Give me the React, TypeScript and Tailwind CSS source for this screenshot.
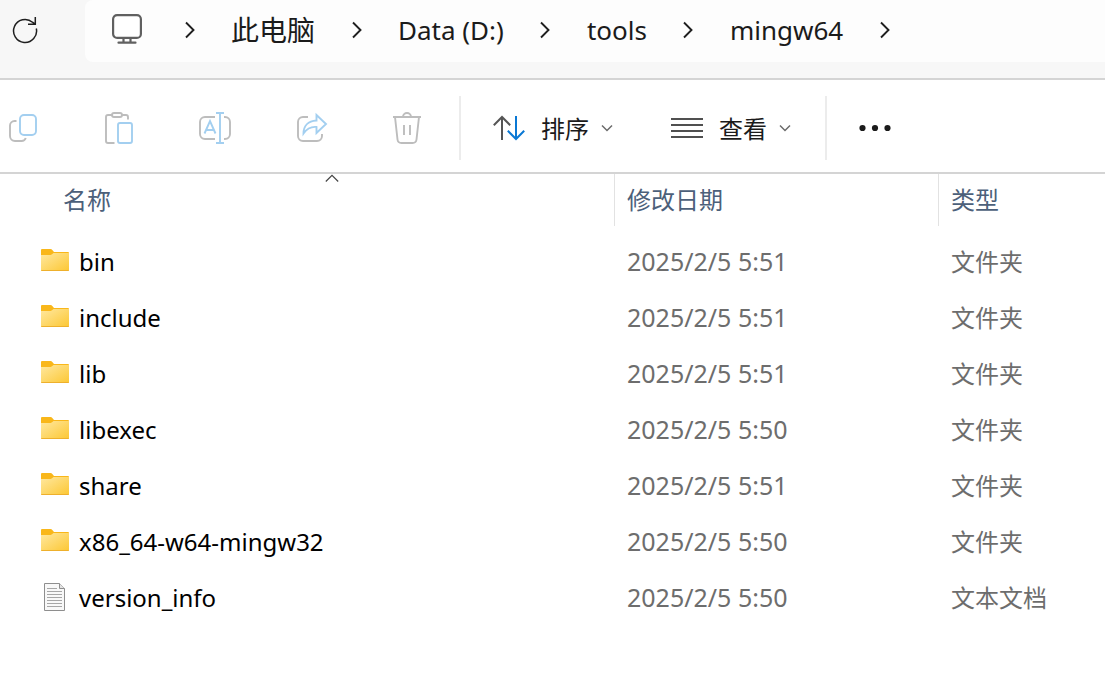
import React from 'react';

type EntryKind = 'folder' | 'file';

interface Entry {
  name: string;
  modified: string;
  type: string;
  kind: EntryKind;
}

const ENTRIES: Entry[] = [
  { name: 'bin', modified: '2025/2/5 5:51', type: '文件夹', kind: 'folder' },
  { name: 'include', modified: '2025/2/5 5:51', type: '文件夹', kind: 'folder' },
  { name: 'lib', modified: '2025/2/5 5:51', type: '文件夹', kind: 'folder' },
  { name: 'libexec', modified: '2025/2/5 5:50', type: '文件夹', kind: 'folder' },
  { name: 'share', modified: '2025/2/5 5:51', type: '文件夹', kind: 'folder' },
  { name: 'x86_64-w64-mingw32', modified: '2025/2/5 5:50', type: '文件夹', kind: 'folder' },
  { name: 'version_info', modified: '2025/2/5 5:50', type: '文本文档', kind: 'file' },
];

const CRUMBS = [
  { label: '此电脑', className: 'text-[28px]' },
  { label: 'Data (D:)', className: 'text-[26px]' },
  { label: 'tools', className: 'text-[26px]' },
  { label: 'mingw64', className: 'text-[26px]' },
];

const GREY = '#bdbdbd';
const BLUE = '#a3cff0';

/* Toolbar icons, all on a 48px grid */
const TOOLS = [
  {
    label: '复制',
    icon: (
      <>
        <path d="M16.5 17H14.5a4.5 4.5 0 0 0-4.5 4.5V32a5 5 0 0 0 5 5h6.5a4.5 4.5 0 0 0 4.3-3" stroke={GREY} />
        <rect x="20" y="11" width="16" height="20" rx="4" stroke={BLUE} />
      </>
    ),
  },
  {
    label: '粘贴',
    icon: (
      <>
        <path d="M16 11H12a2 2 0 0 0-2 2V37a2 2 0 0 0 2 2H18.5M26 11h4a2 2 0 0 1 2 2v2.5" stroke={GREY} />
        <rect x="16" y="9" width="10" height="4" rx="2" stroke={GREY} />
        <rect x="22" y="19" width="14" height="20" rx="2" stroke={BLUE} />
      </>
    ),
  },
  {
    label: '重命名',
    icon: (
      <>
        <path d="M23 13H13a5 5 0 0 0-5 5V30a5 5 0 0 0 5 5H23M32 13h1a5 5 0 0 1 5 5V30a5 5 0 0 1-5 5h-1" stroke={GREY} />
        <path d="M12.5 29.5 18 17l5.5 12.5M14.5 26h7M28 9V39M24 9h8M24 39h8" stroke={BLUE} />
      </>
    ),
  },
  {
    label: '共享',
    icon: (
      <>
        <path d="M20 13H15a5 5 0 0 0-5 5V32a5 5 0 0 0 5 5H29a5 5 0 0 0 5-5v-2" stroke={GREY} />
        <path d="M28.5 11 38 20l-9.5 9v-6c-5-.5-9.500 1.500-13 6.500C15.500 22 20 17 28.500 16.500z" stroke={BLUE} />
      </>
    ),
  },
  {
    label: '删除',
    icon: (
      <>
        <path d="M9 13H37M19 13a4 4 0 0 1 8 0M11 13l2.500 22.500A4 4 0 0 0 17.500 39h11a4 4 0 0 0 4-3.500L35 13M20 21v10M26 21v10" stroke={GREY} />
      </>
    ),
  },
];

const CrumbChevron: React.FC = () => (
  <button type="button" aria-label="展开" className="flex h-full w-[83px] shrink-0 items-center justify-center pb-0.5">
    <svg width="10" height="18" viewBox="0 0 10 18" fill="none" stroke="#1f1f1f" strokeWidth="1.9">
      <path d="M1 1.500 8.500 9 1 16.500" />
    </svg>
  </button>
);

const DownChevron: React.FC = () => (
  <svg className="-ml-1" width="12" height="8" viewBox="0 0 12 8" fill="none" stroke="#6b6b6b" strokeWidth="1.5">
    <path d="M1 1.500 6 6.500l5-5" />
  </svg>
);

const FolderIcon: React.FC = () => (
  <svg width="28" height="26" viewBox="0 0 28 26" className="shrink-0">
    <defs>
      <linearGradient id="folder-front" x1="0" y1="0" x2="1" y2="1">
        <stop offset="0" stopColor="#ffe8a0" />
        <stop offset="1" stopColor="#fcc733" />
      </linearGradient>
    </defs>
    <path d="M0 1a1 1 0 0 1 1-1h8.500c.8 0 1.300.3 1.800.9L13 3h14a1 1 0 0 1 1 1v6H0z" fill="#f9b71a" />
    <path d="M0 6h9c1 0 1.500-.3 2-.8L12.500 4H28v17a1 1 0 0 1-1 1H1a1 1 0 0 1-1-1z" fill="url(#folder-front)" />
    <path d="M0 21a1 1 0 0 0 1 1h26a1 1 0 0 0 1-1z" fill="#eeb02c" />
  </svg>
);

const FileIcon: React.FC = () => (
  <svg width="28" height="30" viewBox="0 0 28 30" className="shrink-0" fill="none">
    <path d="M3.500 .5h15l5 5v22h-20z" fill="#f8f8f8" stroke="#8e8e8e" />
    <path d="M18.500 .5v5h5" fill="#e4e4e4" stroke="#8e8e8e" />
    <path d="M6 5.500h10M6 8.500h15M6 11.500h15M6 14.500h15M6 17.500h15M6 20.500h15M6 23.500h15" stroke="#a6a6a6" />
  </svg>
);

const AddressBar: React.FC = () => (
  <header className="flex h-20 items-start border-b-2 border-[#d4d4d4] bg-[#f7f7f7]">
    <button type="button" aria-label="刷新" className="flex h-[62px] w-[85px] shrink-0 items-center pb-0.5 pl-3">
      <svg width="26" height="28" viewBox="0 0 26 28" fill="none" stroke="#1f1f1f" strokeWidth="1.500">
        <path d="M24.300 12.500A11.500 11.500 0 1 1 20.500 6.200L22.900 8M23.300 1v7.300H16" />
      </svg>
    </button>
    <nav aria-label="路径" className="flex h-[62px] min-w-0 flex-1 items-center overflow-hidden rounded-l-lg bg-[#fdfdfd] pl-[27px] text-[#1b1b1b]">
      <button type="button" aria-label="此电脑" className="flex h-full w-9 shrink-0 items-center pb-1">
        <svg width="30" height="30" viewBox="0 0 30 30" fill="none" stroke="#606060" strokeWidth="2.200">
          <rect x="1.100" y="1.100" width="27.800" height="22.800" rx="4" fill="#fff" />
          <path d="M11.500 24v4.500M18.500 24v4.500" />
          <path d="M6.500 28.700h17" strokeLinecap="round" />
        </svg>
      </button>
      <CrumbChevron />
      {CRUMBS.map((crumb) => (
        <React.Fragment key={crumb.label}>
          <a href="#" className={`shrink-0 pb-0.5 leading-9 ${crumb.className}`}>{crumb.label}</a>
          <CrumbChevron />
        </React.Fragment>
      ))}
    </nav>
  </header>
);

const Toolbar: React.FC = () => (
  <div role="toolbar" className="flex border-b-2 border-[#d4d4d4] pt-4 pb-3 text-2xl text-[#1b1b1b]">
    <div className="flex h-16 items-center gap-12">
      {TOOLS.map((tool) => (
        <button key={tool.label} type="button" aria-label={tool.label} disabled className="size-12 shrink-0">
          <svg width="48" height="48" viewBox="0 0 48 48" fill="none" strokeWidth="1.900">{tool.icon}</svg>
        </button>
      ))}
    </div>
    <div className="ml-[27px] h-16 w-0.5 bg-[#ececec]" />
    <button type="button" className="ml-8 flex h-16 shrink-0 items-center gap-4">
      <svg width="32" height="26" viewBox="0 0 32 26" fill="none" strokeWidth="2">
        <path d="M9 25V2M.8 10.200 9 2l8.200 8.200" stroke="#555" />
        <path d="M23 1v23M14.800 15.800 23 24l8.200-8.200" stroke="#0a78d4" />
      </svg>
      <span className="pt-0.5">排序</span>
      <DownChevron />
    </button>
    <button type="button" className="ml-[58px] flex h-16 shrink-0 items-center gap-4">
      <svg width="32" height="20" viewBox="0 0 32 20" fill="none" stroke="#505050" strokeWidth="1.900">
        <path d="M0 1h32M0 7h32M0 13h32M0 19h32" />
      </svg>
      <span className="pt-0.5">查看</span>
      <DownChevron />
    </button>
    <div className="ml-[34px] h-16 w-0.5 bg-[#ececec]" />
    <button type="button" aria-label="更多" className="ml-8 flex h-16 items-center">
      <svg width="32" height="8" viewBox="0 0 32 8" fill="#1b1b1b">
        <circle cx="3.500" cy="4" r="3.100" />
        <circle cx="16" cy="4" r="3.100" />
        <circle cx="28.500" cy="4" r="3.100" />
      </svg>
    </button>
  </div>
);

const FileTable: React.FC = () => (
  <table className="w-full table-fixed border-collapse text-left text-2xl">
    <colgroup>
      <col className="w-[614px]" />
      <col className="w-[324px]" />
      <col />
    </colgroup>
    <thead className="text-[#4c607a]">
      <tr>
        <th className="p-0 pb-2 pl-[50px] font-normal">
          <button type="button" className="relative flex h-[52px] w-full items-center pl-[13px]">
            名称
            <svg className="absolute top-0 left-1/2 -translate-x-1/2" width="14" height="8" viewBox="0 0 14 8" fill="none" stroke="#444" strokeWidth="1.200">
              <path d="M.8 7.500 7 1.300l6.200 6.200" />
            </svg>
          </button>
        </th>
        <th className="p-0 pb-2 font-normal">
          <button type="button" className="flex h-[52px] w-full items-center border-l border-[#e2e2e2] pl-3">修改日期</button>
        </th>
        <th className="p-0 pb-2 font-normal">
          <button type="button" className="flex h-[52px] w-full items-center border-l border-[#e2e2e2] pl-3">类型</button>
        </th>
      </tr>
    </thead>
    <tbody className="text-[#6d6d6d]">
      {ENTRIES.map((entry) => (
        <tr key={entry.name} className="h-14">
          <td className="p-0 pl-[41px]">
            <div className="flex items-center gap-2.5">
              {entry.kind === 'folder' ? <FolderIcon /> : <FileIcon />}
              <span className="leading-9 text-black">{entry.name}</span>
            </div>
          </td>
          <td className="p-0 pb-0.5 pl-[13px] text-[25px] leading-9">{entry.modified}</td>
          <td className="p-0 pl-[13px] leading-9">{entry.type}</td>
        </tr>
      ))}
    </tbody>
  </table>
);

const App: React.FC = () => {
  return (
    <div className="min-h-screen overflow-x-hidden bg-white font-['Noto_Sans','Noto_Sans_CJK_SC',sans-serif]">
      <AddressBar />
      <Toolbar />
      <main>
        <FileTable />
      </main>
    </div>
  );
};

export default App;
